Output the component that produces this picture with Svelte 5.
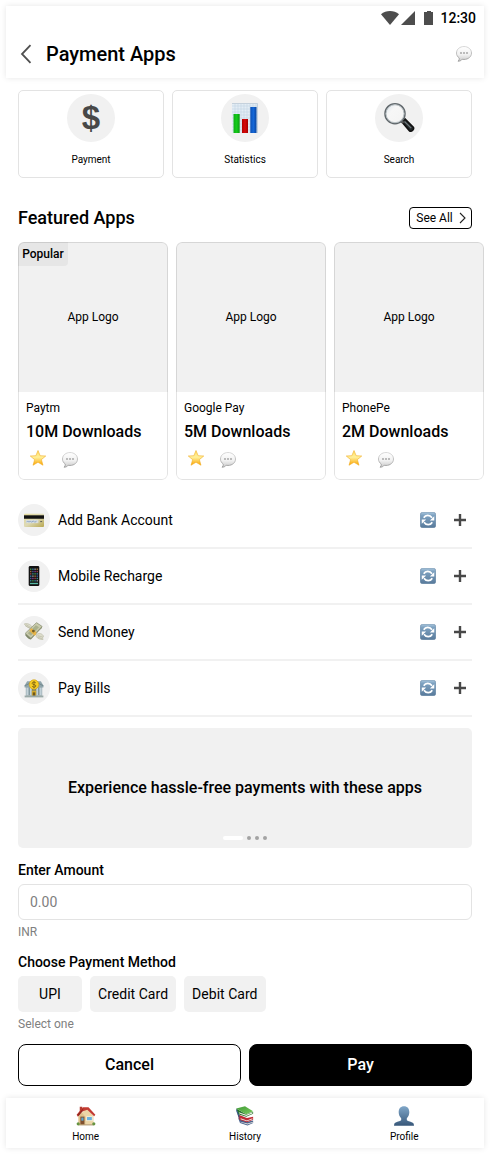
<script>
  const tiles = [
    { icon: 'dollar', label: 'Payment' },
    { icon: 'chart', label: 'Statistics' },
    { icon: 'search', label: 'Search' }
  ];
  const apps = [
    { name: 'Paytm', downloads: '10M Downloads', popular: true },
    { name: 'Google Pay', downloads: '5M Downloads' },
    { name: 'PhonePe', downloads: '2M Downloads' }
  ];
  const actions = [
    { icon: 'card', label: 'Add Bank Account' },
    { icon: 'phone', label: 'Mobile Recharge' },
    { icon: 'money', label: 'Send Money' },
    { icon: 'bank', label: 'Pay Bills' }
  ];
  const methods = ['UPI', 'Credit Card', 'Debit Card'];
  const tabs = [
    { icon: 'home', label: 'Home' },
    { icon: 'books', label: 'History' },
    { icon: 'person', label: 'Profile' }
  ];
  const keys = [0, 1, 2, 3, 4, 5];
  const keyColors = ['#59d36b', '#4aa8e8', '#d9d9d9', '#e8a04a', '#5b7be0', '#c24fc9', '#e05c5c', '#4ec7c7'];
</script>

<svg class="defs" width="0" height="0" aria-hidden="true">
  <defs>
    <linearGradient id="bubble" x1="0" y1="0" x2="0" y2="1"><stop offset="0" stop-color="#fff" /><stop offset=".55" stop-color="#f1f1f1" /><stop offset="1" stop-color="#c9c9c9" /></linearGradient>
    <linearGradient id="bubbleEdge" x1="0" y1="0" x2="0" y2="1"><stop offset="0" stop-color="#cfcfcf" /><stop offset="1" stop-color="#8e8e8e" /></linearGradient>
    <linearGradient id="starFill" x1="0" y1="0" x2="0" y2="1"><stop offset="0" stop-color="#ffdc60" /><stop offset=".45" stop-color="#fff09a" /><stop offset="1" stop-color="#fba400" /></linearGradient>
    <linearGradient id="sync" x1="0" y1="0" x2="0" y2="1"><stop offset="0" stop-color="#a9c6dd" /><stop offset=".2" stop-color="#7ea2c1" /><stop offset="1" stop-color="#587a9b" /></linearGradient>
    <linearGradient id="bust" x1="0" y1="0" x2="0" y2="1"><stop offset="0" stop-color="#7fa6c8" /><stop offset="1" stop-color="#38587a" /></linearGradient>
    <linearGradient id="green" x1="0" y1="0" x2="1" y2="0"><stop offset="0" stop-color="#0fae14" /><stop offset=".5" stop-color="#13cc1a" /><stop offset="1" stop-color="#0b9a10" /></linearGradient>
    <linearGradient id="red" x1="0" y1="0" x2="1" y2="0"><stop offset="0" stop-color="#b30000" /><stop offset=".5" stop-color="#d80a0a" /><stop offset="1" stop-color="#a30000" /></linearGradient>
    <linearGradient id="blue" x1="0" y1="0" x2="1" y2="0"><stop offset="0" stop-color="#0a4fb5" /><stop offset=".5" stop-color="#1568d8" /><stop offset="1" stop-color="#0a459f" /></linearGradient>
    <linearGradient id="plastic" x1="0" y1="0" x2="1" y2="1"><stop offset="0" stop-color="#e6dc9c" /><stop offset=".5" stop-color="#ddd9b4" /><stop offset="1" stop-color="#b9a850" /></linearGradient>
    <linearGradient id="lens" x1="0" y1="0" x2="1" y2="1"><stop offset="0" stop-color="#d5e2ea" /><stop offset=".35" stop-color="#f7f7f7" /><stop offset="1" stop-color="#f3f3f3" /></linearGradient>
    <linearGradient id="cover" x1="0" y1="0" x2="1" y2="1"><stop offset="0" stop-color="#3f9c35" /><stop offset="1" stop-color="#7ac95e" /></linearGradient>
  </defs>
</svg>

{#snippet icon(name, size)}
  <svg width={size} height={size} viewBox="0 0 32 32" aria-hidden="true">
    {#if name === 'bubble'}
      <path d="M16 1C7.500 1 1 6.700 1 14c0 4.300 2.200 7.700 5.500 10 .2 2.600-.5 4.900-2.200 6.500 3.700-.2 6.300-1.700 8.200-4 1.100.3 2.300.4 3.500.4 8.500 0 15-5.600 15-12.900S24.500 1 16 1z" fill="url(#bubble)" stroke="url(#bubbleEdge)" stroke-width="1.600" />
      <circle cx="10" cy="14" r="1.500" fill="#666" /><circle cx="16" cy="14" r="1.500" fill="#666" /><circle cx="22" cy="14" r="1.500" fill="#666" />
    {:else if name === 'star'}
      <path d="M16 1l4.300 10.400L31.500 12l-8.700 7.300L26 30.500l-10-6-10 6 3.200-11.200L.5 12l11.200-.6z" fill="url(#starFill)" stroke="#f0a81c" stroke-width="1.100" stroke-linejoin="round" />
    {:else if name === 'sync'}
      <rect x=".5" y=".5" width="31" height="31" rx="5" fill="url(#sync)" stroke="#55799b" />
      <g fill="none" stroke="#fff" stroke-width="3.400"><path d="M7.500 11.500C11 5 20 5 24 11.500" /><path d="M24.500 20.500C21 27 12 27 8 20.500" /></g>
      <path d="M28.500 8.500v8.500h-8.800zM3.500 23.500V15h8.800z" fill="#fff" />
    {:else if name === 'chart'}
      <rect x="3" y="1" width="26" height="30" fill="#e3edf5" />
      <path d="M3 4h26M3 7h26M3 10h26M3 13h26M3 16h26M3 19h26M3 22h26M3 25h26M3 28h26M6 1v30M9 1v30M12 1v30M15 1v30M18 1v30M21 1v30M24 1v30M27 1v30" stroke="#c3d3e3" stroke-width=".6" />
      <path d="M3 1.500h25.500V31" fill="none" stroke="#c5d1dc" />
      <path d="M4.500 12h6.200v19H4.500z" fill="url(#green)" /><path d="M13 17h6v14h-6z" fill="url(#red)" /><path d="M21.300 5h6.200v26h-6.200z" fill="url(#blue)" />
    {:else if name === 'search'}
      <path d="M19 20l3-3 8.300 8.200c1.200 1.800-1.600 4.900-3.600 3.800z" fill="#24292b" stroke="#111" stroke-width="1.600" />
      <path d="M21.500 19.500l6.700 6.700" stroke="#6f787b" stroke-width="1.200" />
      <path d="M17.500 18.500l3 2.500" stroke="#555" stroke-width="2.500" />
      <circle cx="12" cy="11.700" r="10" fill="url(#lens)" stroke="#61686c" stroke-width="1.500" />
      <circle cx="12" cy="11.700" r="9" fill="none" stroke="#b5bdc1" stroke-width="1" />
    {:else if name === 'card'}
      <rect x="0" y="6" width="32" height="21" rx="1.500" fill="url(#plastic)" />
      <rect x="0" y="8.500" width="32" height="5.500" fill="#111" />
      <rect x="3" y="16" width="20" height="5" fill="#d8dddc" />
      <path d="M4 19.500l2-2 2 2 2-2 2 2 3-2 2 2 3-1.500" fill="none" stroke="#6688b8" /><path d="M26 18.500h3" stroke="#555" stroke-width="1.500" />
    {:else if name === 'phone'}
      <rect x="7.500" y="0" width="17" height="32" rx="2.200" fill="#111" />
      {#each keys as row}
        {#each [0, 1, 2, 3] as col}
          <rect x={9.6 + col * 3.5} y={4 + row * 3.7} width="2.300" height="2.300" fill={keyColors[(row * 3 + col) % 8]} opacity=".65" />
        {/each}
      {/each}
      <path d="M9.500 28h13" stroke="#58b8a4" stroke-width="2.200" />
    {:else if name === 'money'}
      <path d="M11 11C8 9 3 8 .5 3c4-1.500 9 0 13 5z" fill="#dcdccb" stroke="#b9b8a4" /><path d="M3 4l8 5M2 6l8 4" stroke="#b9b8a4" />
      <path d="M20 20c4-3 9-2 11.500 3-2 1.500-2 3-1 5-4 0-9-1-11-5z" fill="#dcdccb" stroke="#b9b8a4" /><path d="M22 22l8 2M22 24l7 3" stroke="#b9b8a4" />
      <path d="M20 1l9 6c0 2-1 4-3 5L11 28c-2 0-6-3-9-7 0-2 1-3 2-4z" fill="#7f8768" />
      <path d="M20 1l9 6L11 26 2 18z" fill="#c9cbac" stroke="#8b9176" />
      <path d="M19 5l5 3.500L11 22l-5-4z" fill="#a9b08c" />
      <path d="M11.500 9.500l8.500 7-1 4-2 1.500-8.500-8z" fill="#e6b347" /><circle cx="15" cy="14.500" r="2.300" fill="#735e29" />
    {:else if name === 'bank'}
      <path d="M1 12L5 5h22l4 7v3H1z" fill="#8fa5ab" /><path d="M1 12.500L16 5l15 7.500" fill="none" stroke="#71868c" stroke-width="1.500" />
      <rect x="3" y="15" width="26" height="13" fill="#5d757d" />
      <path d="M3.500 15h4v13h-4zM9 15h3.500v13H9zM19.500 15H23v13h-3.500zM24.500 15h4v13h-4z" fill="#c3d2d8" />
      <rect x="12.500" y="20" width="7" height="9" fill="#d3aa2e" /><path d="M14 23h4v6h-4z" fill="#6e571c" />
      <path d="M1 28h30v3H1z" fill="#9aa9a7" />
      <circle cx="16" cy="10.500" r="7.700" fill="#f5cc24" stroke="#cf9b13" />
      <path d="M19 8c-1-2-6-2-6 .5 0 2.800 6 1.300 6 4.200 0 2.600-5 2.700-6 .3M16 5v11.500" fill="none" stroke="#785b11" stroke-width="1.300" />
    {:else if name === 'home'}
      <path d="M4 15L17 4l11 12v14H4z" fill="#ecd6a8" /><path d="M4 15l5-5 6 7v13H4z" fill="#dfc28e" />
      <path d="M6 1h4v6l-4 3z" fill="#b43b31" />
      <path d="M1 14L11 2h9l11 12-2 2.500L18 6 9 9l-6 8z" fill="#c33b32" /><path d="M2 14L12 3l-2 6-6 7z" fill="#922820" />
      <rect x="7" y="17" width="6.500" height="12.500" fill="#80502f" /><rect x="8.500" y="18.500" width="3.500" height="5" fill="#5ba8d2" />
      <rect x="17" y="17" width="9" height="6.500" fill="#68b1df" stroke="#fff2d5" stroke-width="1.300" />
      <path d="M4 29.500h24v1.500H4z" fill="#a78c62" /><circle cx="3.500" cy="28.500" r="2.500" fill="#669442" /><circle cx="28.500" cy="28.500" r="2.500" fill="#669442" />
    {:else if name === 'books'}
      <path d="M5 19l3 8 12 4 9-4v-4l-9 2z" fill="#4b638e" /><path d="M8 25l12 3 9-3v1.500l-9 3-11-3.500z" fill="#e6e5df" />
      <path d="M4 13l3 9 12 4 10-4v-5l-10 2z" fill="#c02a35" /><path d="M9 19.500l10 3.500 9-3.500v1.500l-9 3.500-10-3.500z" fill="#f0eee7" />
      <path d="M2 4l3 9 13 4 11-4.500V9l-11 4z" fill="#28742c" /><path d="M6 10l12 4 10-4v2l-10 4-11-4z" fill="#f1f0e9" />
      <path d="M2 4l14-3.500 13 8L18 13z" fill="url(#cover)" /><path d="M2 4v4l5 13v-6z" fill="#315583" />
    {:else if name === 'person'}
      <path d="M16 .5c-5.500 0-8.500 3.700-8.500 9.500 0 4 1.700 7.500 4 9.500v3c0 2-9.500 2.500-11 6l-.5 3h32l-.5-3c-1.500-3.500-11-4-11-6v-3c2.300-2 4-5.500 4-9.500 0-5.800-3-9.500-8.500-9.500z" fill="url(#bust)" />
    {/if}
  </svg>
{/snippet}

<main>
  <header>
    <div class="status">
      <svg width="54" height="16" viewBox="0 0 54 16" fill="#4d4d4d" aria-hidden="true">
        <path d="M0 4.200C5-.1 13-.1 18 4.200L9 15z" /><path d="M34 1v14H20z" /><path d="M43 2h3V1h4v1h2v13h-9z" />
      </svg>
      <span>12:30</span>
    </div>
    <div class="titlebar">
      <svg width="12" height="20" viewBox="0 0 12 20" fill="none" stroke="#505050" stroke-width="1.800" aria-hidden="true"><path d="M10.500 1.200L2 10l8.500 8.800" /></svg>
      <h1>Payment Apps</h1>
      {@render icon('bubble', 16)}
    </div>
  </header>

  <div class="content">
    <section class="tiles">
      {#each tiles as t}
        <div class="tile">
          <div class="disc">
            {#if t.icon === 'dollar'}<span class="dollar">$</span>{:else}{@render icon(t.icon, 32)}{/if}
          </div>
          <span>{t.label}</span>
        </div>
      {/each}
    </section>

    <div class="heading">
      <h2>Featured Apps</h2>
      <button class="see">See All <svg width="7" height="12" viewBox="0 0 7 12" fill="none" stroke="#222" stroke-width="1.100" aria-hidden="true"><path d="M1 1l5 5-5 5" /></svg></button>
    </div>

    <section class="apps">
      {#each apps as a}
        <article>
          <div class="logo">App Logo{#if a.popular}<b>Popular</b>{/if}</div>
          <p>{a.name}</p>
          <h3>{a.downloads}</h3>
          <div class="marks">{@render icon('star', 16)}{@render icon('bubble', 16)}</div>
        </article>
      {/each}
    </section>

    <section class="actions">
      {#each actions as a}
        <div class="row">
          <div class="disc small">{@render icon(a.icon, 20)}</div>
          <span>{a.label}</span>
          {@render icon('sync', 16)}
          <svg class="plus" width="12" height="12" viewBox="0 0 12 12" stroke="#484848" stroke-width="2.400" aria-hidden="true"><path d="M0 6h12M6 0v12" /></svg>
        </div>
      {/each}
    </section>

    <section class="banner">
      <strong>Experience hassle-free payments with these apps</strong>
      <div class="dots"><i class="on"></i><i></i><i></i><i></i></div>
    </section>

    <label for="amount">Enter Amount</label>
    <input id="amount" placeholder="0.00" />
    <small>INR</small>

    <h4>Choose Payment Method</h4>
    <div class="chips">{#each methods as m}<button>{m}</button>{/each}</div>
    <small>Select one</small>

    <div class="buttons"><button>Cancel</button><button class="primary">Pay</button></div>
  </div>

  <nav>
    {#each tabs as t}
      <div>{@render icon(t.icon, 20)}<span>{t.label}</span></div>
    {/each}
  </nav>
</main>

<style>
  :global(body) { background: #fff; }
  .defs { position: absolute; }
  * { box-sizing: border-box; }
  main { width: 478px; margin: 0 6px; padding: 6px 0; color: #000; font-family: Roboto, sans-serif; font-size: 14px; display: flex; flex-direction: column; }
  svg { display: block; flex: none; }
  h1, h2, h3, h4, p { margin: 0; font-weight: 500; }
  button { font: inherit; color: inherit; padding: 0; border: 0; }
  header, nav { background: #fff; box-shadow: 0 0 6px rgba(0, 0, 0, .1); }
  header { height: 72px; }
  .status { height: 24px; padding-right: 8px; display: flex; justify-content: flex-end; align-items: center; gap: 5px; font-size: 14px; font-weight: 500; }
  .status span { width: 36px; text-align: right; white-space: nowrap; }
  .titlebar { height: 48px; padding: 0 12px 0 14px; display: flex; align-items: center; }
  h1 { flex: 1; margin-left: 14px; font-size: 20px; line-height: 24px; }
  .content { padding: 12px 12px; height: 1020px; display: flex; flex-direction: column; }
  .tiles { display: flex; gap: 8px; height: 88px; flex: none; }
  .tile { flex: 1; border: 1px solid #e3e3e3; border-radius: 5px; padding-top: 3px; display: flex; flex-direction: column; align-items: center; }
  .tile > span { margin-top: 11px; font-size: 10px; line-height: 14px; }
  .disc { width: 48px; height: 48px; border-radius: 50%; background: #f1f1f1; display: flex; align-items: center; justify-content: center; flex: none; }
  .small { width: 32px; height: 32px; }
  .dollar { font: bold 33px/48px "Liberation Sans", sans-serif; color: #484848; }
  .heading { height: 64px; padding-top: 16px; display: flex; justify-content: space-between; align-items: center; }
  h2 { font-size: 18px; line-height: 24px; }
  .see { width: 63px; height: 22px; padding-left: 1px; border: 1px solid #000; border-radius: 4px; background: #fff; font-size: 12px; display: flex; align-items: center; justify-content: center; gap: 6px; white-space: nowrap; }
  .apps { display: flex; gap: 8px; height: 238px; flex: none; }
  article { position: relative; width: 150px; height: 238px; flex: none; border-radius: 6px; overflow: hidden; }
  article::after { content: ''; position: absolute; inset: 0; border: 1px solid rgba(0, 0, 0, .11); border-radius: 6px; }
  .logo { height: 150px; background: #f1f1f1; display: flex; align-items: center; justify-content: center; font-size: 12px; }
  .logo b { position: absolute; left: 0; top: 0; width: 50px; height: 24px; background: #e6e6e6; border-bottom-right-radius: 4px; font-weight: 500; line-height: 24px; text-align: center; }
  article p { margin: 8px 8px 0; font-weight: 400; font-size: 12px; line-height: 16px; }
  article h3 { margin: 4px 8px 0; font-size: 16px; line-height: 24px; }
  .marks { display: flex; gap: 16px; padding: 6px 12px; }
  .marks :global(svg:last-child) { margin-top: 2px; }
  .actions { padding-top: 13px; }
  .row { height: 56px; border-bottom: 2px solid #f1f1f1; display: flex; align-items: center; padding-right: 6px; }
  .row span { flex: 1; margin-left: 8px; }
  .plus { margin-left: 18px; }
  .banner { height: 120px; margin-top: 11px; background: #f1f1f1; border-radius: 5px; flex: none; display: flex; flex-direction: column; align-items: center; }
  .banner strong { font-weight: 500; font-size: 16px; line-height: 24px; margin-top: 48px; }
  .dots { display: flex; gap: 4px; margin-top: 36px; }
  .dots i { width: 4px; height: 4px; border-radius: 2px; background: #a3a3a3; }
  .dots .on { width: 20px; background: #fff; }
  label, h4 { font-size: 14px; font-weight: 500; line-height: 20px; }
  label { margin-top: 12px; }
  h4 { margin-top: 12px; }
  input { height: 36px; margin-top: 4px; padding: 0 11px; border: 1px solid #e3e3e3; border-radius: 6px; font: 14px Roboto, sans-serif; flex: none; }
  input::placeholder { color: #808080; opacity: 1; }
  small { margin-top: 4px; font-size: 12px; line-height: 16px; color: #808080; }
  .chips { display: flex; gap: 8px; margin-top: 4px; }
  .chips button { height: 36px; min-width: 64px; padding: 0 8px; border-radius: 5px; background: #f1f1f1; letter-spacing: .03px; }
  .buttons { display: flex; gap: 8px; margin-top: 12px; }
  .buttons button { flex: 1; height: 42px; padding-bottom: 2px; border: 1px solid #000; border-radius: 8px; background: #fff; font-size: 16px; font-weight: 500; }
  .buttons .primary { background: #000; color: #fff; }
  nav { height: 50px; display: flex; }
  nav div { flex: 1; padding-top: 8px; display: flex; flex-direction: column; align-items: center; font-size: 10px; line-height: 14px; }
  nav span { margin-top: 4px; }
</style>
